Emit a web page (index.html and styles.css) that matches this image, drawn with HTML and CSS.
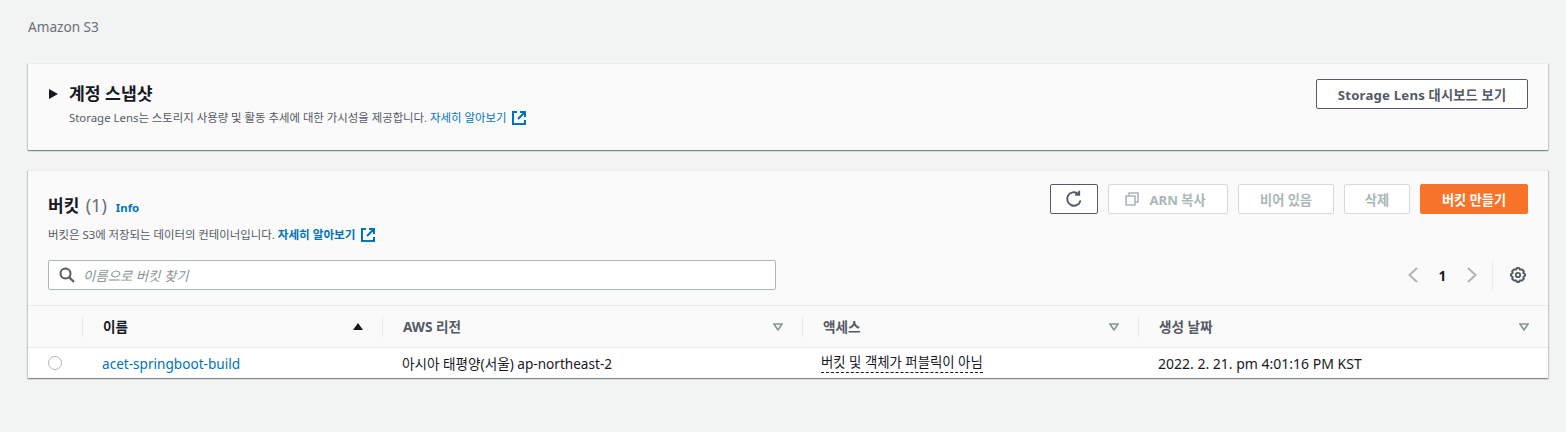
FILE: index.html
```html
<!DOCTYPE html>
<html lang="ko">
<head>
<meta charset="utf-8">
<title>Amazon S3</title>
<link rel="stylesheet" href="styles.css">
</head>
<body>
<div class="crumb">Amazon S3</div>

<section class="card snapshot">
  <div class="snap-text">
    <h2 class="snap-title"><svg class="caret" width="9" height="10" viewBox="0 0 9 10"><path d="M0 0L9 5L0 10Z" fill="#16191f"/></svg><span>계정 스냅샷</span></h2>
    <p class="snap-desc">Storage Lens는 스토리지 사용량 및 활동 추세에 대한 가시성을 제공합니다. <a class="link" href="#">자세히 알아보기</a><svg class="ext" width="16" height="16" viewBox="0 0 16 16"><path d="M6 2H2V14H14V10M9 2H14V7M14 2L7 9" fill="none" stroke="#0073bb" stroke-width="2"/></svg></p>
  </div>
  <button class="btn btn-lens">Storage Lens 대시보드 보기</button>
</section>

<section class="card buckets">
  <div class="head">
    <div class="head-top">
      <div class="head-title">
        <h2 class="title">버킷 <span class="count">(1)</span></h2>
        <a class="info" href="#">Info</a>
      </div>
      <div class="actions">
        <button class="btn btn-icon"><svg width="18" height="18" viewBox="0 0 16 16"><path d="M13.8 9.2A6 6 0 1 1 11.6 3.2M12.6 0.6V4.2H9" fill="none" stroke="#545b64" stroke-width="1.7"/></svg></button>
        <button class="btn btn-off btn-arn"><svg width="14" height="14" viewBox="0 0 14 14"><path d="M4 4V1H13V10H10M1 4H10V13H1Z" fill="none" stroke="#aab7b8" stroke-width="1.6"/></svg>ARN 복사</button>
        <button class="btn btn-off btn-empty">비어 있음</button>
        <button class="btn btn-off btn-del">삭제</button>
        <button class="btn btn-primary">버킷 만들기</button>
      </div>
    </div>
    <p class="desc">버킷은 S3에 저장되는 데이터의 컨테이너입니다. <a class="link link-bold" href="#">자세히 알아보기</a><svg class="ext" width="16" height="16" viewBox="0 0 16 16"><path d="M6 2H2V14H14V10M9 2H14V7M14 2L7 9" fill="none" stroke="#0073bb" stroke-width="2"/></svg></p>
    <div class="tools">
      <div class="search">
        <svg width="16" height="16" viewBox="0 0 16 16"><circle cx="6.5" cy="6.5" r="5" fill="none" stroke="#545b64" stroke-width="2"/><path d="M10.2 10.2L15 15" stroke="#545b64" stroke-width="2.2"/></svg>
        <span class="placeholder">이름으로 버킷 찾기</span>
      </div>
      <div class="pager">
        <svg width="12" height="16" viewBox="0 0 12 16"><path d="M10 1L2.5 8L10 15" fill="none" stroke="#aab7b8" stroke-width="2"/></svg>
        <span class="page">1</span>
        <svg width="12" height="16" viewBox="0 0 12 16"><path d="M2 1L9.5 8L2 15" fill="none" stroke="#aab7b8" stroke-width="2"/></svg>
        <span class="sep"></span>
        <svg class="gear" width="16" height="16" viewBox="0 0 16 16"><path d="M8 1L9 1L10 2.6L12 2.4L13.8 4.2L13.4 6L15 7.2V8.8L13.4 10L13.8 11.8L12 13.6L10 13.4L9 15H7L6 13.4L4 13.6L2.2 11.8L2.6 10L1 8.8V7.2L2.6 6L2.2 4.2L4 2.4L6 2.6L7 1Z" fill="none" stroke="#545b64" stroke-width="2" stroke-linejoin="round"/><circle cx="8" cy="8" r="2.2" fill="none" stroke="#545b64" stroke-width="1.8"/></svg>
      </div>
    </div>
  </div>

  <div class="tr th">
    <div class="cell cell-radio"></div>
    <div class="cell"><span class="strong">이름</span><svg class="sort" width="10" height="7" viewBox="0 0 10 7"><path d="M5 0L10 7H0Z" fill="#16191f"/></svg></div>
    <div class="cell"><span>AWS 리전</span><svg class="sort" width="10" height="8" viewBox="0 0 10 8"><path d="M1 1H9L5 7Z" fill="none" stroke="#879596" stroke-width="1.6"/></svg></div>
    <div class="cell"><span>액세스</span><svg class="sort" width="10" height="8" viewBox="0 0 10 8"><path d="M1 1H9L5 7Z" fill="none" stroke="#879596" stroke-width="1.6"/></svg></div>
    <div class="cell cell-last"><span>생성 날짜</span><svg class="sort" width="10" height="8" viewBox="0 0 10 8"><path d="M1 1H9L5 7Z" fill="none" stroke="#879596" stroke-width="1.6"/></svg></div>
  </div>
  <div class="tr td">
    <div class="cell cell-radio"><span class="radio"></span></div>
    <div class="cell"><a class="link" href="#">acet-springboot-build</a></div>
    <div class="cell">아시아 태평양(서울) ap-northeast-2</div>
    <div class="cell cell-access"><span class="dashed">버킷 및 객체가 퍼블릭이 아님</span></div>
    <div class="cell cell-last cell-date">2022. 2. 21. pm 4:01:16 PM KST</div>
  </div>
</section>
</body>
</html>
```
FILE: styles.css
```css
* { box-sizing: border-box; }
html, body { margin: 0; }
body {
  width: 1566px;
  height: 432px;
  overflow: hidden;
  background: #f2f3f3;
  padding: 17px 18px 0 28px;
  font-family: "Noto Sans", "Noto Sans CJK KR", sans-serif;
  font-size: 13.6px;
  color: #16191f;
}
.crumb { height: 20px; line-height: 20px; font-size: 13.6px; color: #687078; }
.card {
  background: #fafafa;
  box-shadow: 0 1px 1px 0 rgba(0,28,36,.3), 1px 1px 1px 0 rgba(0,28,36,.15), -1px 1px 1px 0 rgba(0,28,36,.15);
  border-top: 1px solid #eaeded;
}
.snapshot {
  margin-top: 26px;
  height: 87px;
  padding: 16px 20px 0 21px;
  display: flex;
  justify-content: space-between;
  align-items: flex-start;
}
.snap-title { margin: 0; display: flex; align-items: center; gap: 11px; font-size: 17.2px; font-weight: 700; line-height: 28px; }
.snap-desc { margin: 2px 0 0 20px; font-size: 11.4px; line-height: 16px; color: #545b64; white-space: nowrap; }
.link { color: #0073bb; text-decoration: none; }
.link-bold { font-weight: 700; font-size: 11.6px; }
.ext { vertical-align: -4px; margin-left: 5px; }
.btn {
  font-family: inherit;
  font-size: 13.2px;
  font-weight: 700;
  height: 30px;
  border-radius: 2px;
  border: 1px solid #545b64;
  background: #fff;
  color: #545b64;
  display: inline-flex;
  align-items: center;
  justify-content: center;
  padding: 0;
}
.btn-lens { width: 212px; margin-top: -1px; letter-spacing: .2px; }
.buckets { margin-top: 20px; height: 208px; }
.head { padding: 0 20px 0 20px; }
.head-top { display: flex; justify-content: space-between; align-items: flex-start; padding-top: 13px; }
.head-title { display: flex; align-items: baseline; gap: 9px; margin-top: 7px; }
.title { margin: 0; font-size: 17px; font-weight: 700; line-height: 28px; }
.count { font-weight: 400; color: #687078; font-size: 18px; margin-left: 2px; }
.info { color: #0073bb; font-size: 11.4px; font-weight: 700; text-decoration: none; }
.actions { display: flex; gap: 10px; }
.btn-icon { width: 48px; }
.btn-off { background: #fff; border-color: #d5dbdb; color: #aab7b8; }
.btn-arn { width: 120px; gap: 10px; padding-right: 5px; }
.btn-empty { width: 96px; }
.btn-del { width: 66px; }
.btn-primary { width: 108px; background: #f7732a; border-color: #f7732a; color: #fff; }
.desc { margin: 7px 0 0; font-size: 11.4px; line-height: 16px; color: #545b64; white-space: nowrap; }
.tools { display: flex; justify-content: space-between; align-items: center; margin-top: 17px; height: 30px; }
.search {
  width: 728px;
  height: 30px;
  background: #fff;
  border: 1px solid #aab7b8;
  border-radius: 2px;
  display: flex;
  align-items: center;
  gap: 8px;
  padding-left: 10px;
}
.placeholder { font-style: italic; font-size: 13.4px; color: #879596; }
.pager { display: flex; align-items: center; }
.page { width: 47px; text-align: center; font-weight: 700; font-size: 13.6px; }
.sep { width: 1px; height: 30px; background: #eaeded; margin: 0 17px 0 14px; }
.gear { margin-right: 2px; }
.tr {
  display: grid;
  grid-template-columns: 55px 300px 420px 336px 1fr;
}
.th { margin-top: 15px; height: 43px; border-top: 1px solid #eaeded; border-bottom: 1px solid #eaeded; background: #fafafa; font-weight: 700; font-size: 13.6px; color: #545b64; align-items: center; }
.th .cell { height: 21px; padding: 0 19px 0 20px; border-right: 1px solid #eaeded; display: flex; align-items: center; justify-content: space-between; }
.th .cell span { margin-bottom: 2px; }
.th .cell-last { border-right: 0; padding-right: 19px; }
.th .cell .strong { color: #16191f; }
.td { height: 30px; background: #fff; align-items: center; font-size: 13.6px; }
.td .cell { padding: 0 0 0 19px; white-space: nowrap; }
.td .cell-access { padding-left: 18px; font-size: 13.4px; }
.td .cell-date { font-size: 14px; padding-left: 19px; }
.td .cell-radio { display: flex; padding-left: 20px; }
.radio { width: 14px; height: 14px; border-radius: 50%; border: 1px solid #aab7b8; background: #fff; }
.dashed { border-bottom: 1px dashed #16191f; padding-bottom: 1px; display: inline-block; line-height: 18px; }
```
